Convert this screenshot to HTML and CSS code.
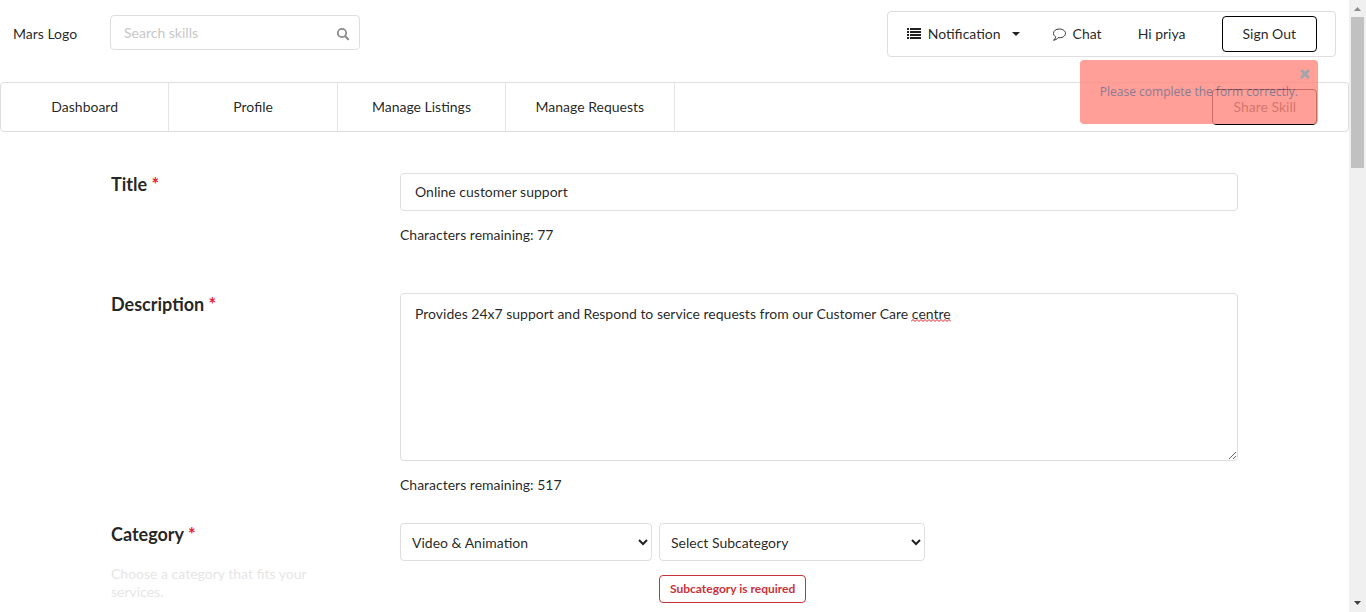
FILE: index.html
```
<!DOCTYPE html>
<html lang="en">
<head>
<meta charset="utf-8">
<title>Share Skill</title>
<link rel="stylesheet" href="styles.css">
</head>
<body>
<div class="page">
  <header class="topbar">
    <a class="brand" href="#">Mars Logo</a>
    <form class="search">
      <input class="search-input" type="text" placeholder="Search skills" aria-label="Search skills">
      <button class="search-button" type="button" aria-label="Search">
        <svg width="14" height="14" viewBox="0 0 14 14" fill="none" stroke="currentColor"><circle cx="6" cy="6" r="4.2" stroke-width="1.8"/><path d="M9.2 9.2l3 3" stroke-width="2" stroke-linecap="round"/></svg>
      </button>
    </form>
    <div class="account">
      <button class="menu-item notification" type="button">
        <svg width="14" height="12" viewBox="0 0 14 12" fill="currentColor"><path d="M0 0h2v2H0zM3 0h11v2H3zM0 3h2v2H0zM3 3h11v2H3zM0 6h2v2H0zM3 6h11v2H3zM0 9h2v2H0zM3 9h11v2H3z"/></svg>
        <span>Notification</span>
        <svg class="caret" width="8" height="4" viewBox="0 0 8 4" fill="currentColor"><path d="M0 0h8L4 4z"/></svg>
      </button>
      <a class="menu-item" href="#">
        <svg width="14" height="13" viewBox="0 0 14 13" fill="none" stroke="currentColor" stroke-width=".9" stroke-linejoin="round"><path d="M7.300 1C3.900 1 1.500 2.900 1.500 5.300c0 1.500.8 2.700 2.200 3.500-.1 1.300-.9 2.400-2.200 3.300 2 0 3.600-.9 4.500-2.400 4.300.5 7.500-1.600 7.500-4.400C13.500 2.900 10.700 1 7.300 1z"/></svg>
        <span>Chat</span>
      </a>
      <span class="greeting">Hi priya</span>
      <button class="outline-button" type="button">Sign Out</button>
    </div>
  </header>

  <nav class="tabs">
    <a class="tab" href="#">Dashboard</a>
    <a class="tab" href="#">Profile</a>
    <a class="tab" href="#">Manage Listings</a>
    <a class="tab" href="#">Manage Requests</a>
    <button class="outline-button share" type="button">Share Skill</button>
  </nav>

  <form class="skill-form">
    <div class="row title-row">
      <label class="row-label" for="title">Title <span class="required">*</span></label>
      <div>
        <input class="field" id="title" type="text" value="Online customer support">
        <p class="remaining">Characters remaining: 77</p>
      </div>
    </div>
    <div class="row description-row">
      <label class="row-label" for="description">Description <span class="required">*</span></label>
      <div>
        <div class="field-wrap">
          <textarea class="field area" id="description" spellcheck="false">Provides 24x7 support and Respond to service requests from our Customer Care centre</textarea>
          <svg class="squiggle" width="40" height="3" viewBox="0 0 40 3" fill="none" stroke="#e01b24"><path d="M0 2.500l2-2 2 2 2-2 2 2 2-2 2 2 2-2 2 2 2-2 2 2 2-2 2 2 2-2 2 2 2-2 2 2 2-2 2 2 2-2 2 2"/></svg>
        </div>
        <p class="remaining">Characters remaining: 517</p>
      </div>
    </div>
    <div class="row">
      <div>
        <label class="row-label" for="category">Category <span class="required">*</span></label>
        <p class="hint">Choose a category that fits your services.</p>
      </div>
      <div class="selects">
        <select class="select category" id="category"><option>Video &amp; Animation</option></select>
        <div class="subcategory">
          <select class="select" aria-label="Subcategory"><option>Select Subcategory</option></select>
          <div class="error">Subcategory is required</div>
        </div>
      </div>
    </div>
  </form>
</div>

<div class="scrollbar" aria-hidden="true">
  <svg class="arrow" width="7" height="4" viewBox="0 0 7 4"><path fill="#8a8a8a" d="M0 4l3.500-4L7 4z"/></svg>
  <div class="thumb"></div>
  <svg class="arrow" width="7" height="4" viewBox="0 0 7 4"><path fill="#404040" d="M0 0h7L3.500 4z"/></svg>
</div>

<div class="toast" role="alert">
  <button class="toast-close" type="button" aria-label="Close">
    <svg width="10" height="10" viewBox="0 0 10 10" fill="none" stroke="currentColor" stroke-width="3"><path d="M1 1l8 8M9 1L1 9"/></svg>
  </button>
  <span>Please complete the form correctly.</span>
</div>
</body>
</html>
```
FILE: styles.css
```
* {
  box-sizing: border-box;
}

body {
  margin: 0;
  display: flex;
  align-items: flex-start;
  min-height: 100vh;
  background: #fff;
  color: rgba(0, 0, 0, 0.87);
  font: 14px/18px Lato, sans-serif;
}

button,
input,
textarea,
select {
  font: inherit;
  color: inherit;
}

a {
  color: inherit;
  text-decoration: none;
}

p {
  margin: 0;
}

.page {
  flex: 1;
  min-width: 0;
}

.topbar {
  display: flex;
  align-items: center;
  padding: 11px 13px 25px;
}

.brand {
  width: 97px;
}

.search {
  position: relative;
  width: 250px;
  margin-bottom: 4px;
}

.search-input {
  display: block;
  width: 100%;
  height: 35px;
  padding: 0 36px 0 13px;
  border: 1px solid #dededf;
  border-radius: 4px;
}

.search-input::placeholder {
  color: #c7c7c7;
}

.search-button {
  position: absolute;
  top: 0;
  right: 0;
  display: flex;
  align-items: center;
  height: 100%;
  padding: 4px 10px 0;
  border: 0;
  background: none;
  color: #8a8a8a;
}

.account {
  display: flex;
  align-items: center;
  gap: 36px;
  height: 46px;
  margin-left: auto;
  padding: 0 18px 0 19px;
  border: 1px solid #dededf;
  border-radius: 4px;
}

.menu-item {
  display: flex;
  align-items: center;
  gap: 7px;
  padding: 0;
  border: 0;
  background: none;
}

.notification {
  margin-right: -4px;
}

.caret {
  margin-left: 4px;
}

.outline-button {
  height: 36px;
  padding: 0 20px;
  border: 1px solid #000;
  border-radius: 4px;
  background: #fff;
}

.tabs {
  display: flex;
  align-items: center;
  height: 50px;
  border: 1px solid #dededf;
  border-radius: 4px;
}

.tab {
  display: flex;
  align-items: center;
  justify-content: center;
  width: 12.5%;
  height: 100%;
  border-right: 1px solid #e5e5e6;
}

.share {
  margin: 0 31px 0 auto;
}

.skill-form {
  max-width: 1127px;
  margin: 41px auto 0;
}

.row {
  display: grid;
  grid-template-columns: 289px 1fr;
}

.title-row {
  margin-bottom: 49px;
}

.description-row {
  margin-bottom: 29px;
}

.row-label {
  display: block;
  font-size: 18px;
  font-weight: 700;
  line-height: 23px;
}

.required {
  color: #e8202c;
}

.field {
  display: block;
  width: 100%;
  height: 38px;
  padding: 0 14px 2px;
  border: 1px solid #dededf;
  border-radius: 4px;
  background: #fff;
}

.field-wrap {
  position: relative;
}

.area {
  height: 168px;
  padding: 11px 14px;
}

.squiggle {
  position: absolute;
  top: 26px;
  left: 511px;
}

.remaining {
  margin-top: 15px;
}

.hint {
  max-width: 240px;
  margin-top: 19px;
  color: #e6e6e6;
}

.selects {
  display: flex;
  align-items: flex-start;
  gap: 7px;
}

.select {
  display: block;
  width: 100%;
  height: 38px;
  padding: 0 0 0 7px;
  border: 1px solid #dededf;
  border-radius: 4px;
  background: #fff;
}

.category {
  width: 252px;
}

.subcategory {
  width: 266px;
}

.error {
  width: fit-content;
  margin-top: 14px;
  padding: 4px 10px;
  border: 1px solid #c8323a;
  border-radius: 4px;
  color: #c8323a;
  font-size: 12px;
  font-weight: 700;
}

.scrollbar {
  position: sticky;
  top: 0;
  display: flex;
  flex-direction: column;
  align-items: center;
  width: 17px;
  height: 100vh;
  padding: 7px 0;
  background: #f0f0f0;
}

.thumb {
  width: 13px;
  height: 151px;
  margin: 6px 0 auto;
  background: #c1c1c1;
}

.toast {
  position: fixed;
  top: 60px;
  right: 48px;
  padding: 23px 20px;
  border-radius: 4px;
  background: #ff887e;
  color: #6a5a78;
  font-family: "Open Sans", sans-serif;
  font-size: 12px;
  opacity: 0.8;
}

.toast-close {
  position: absolute;
  top: 9px;
  right: 8px;
  display: flex;
  padding: 0;
  border: 0;
  background: none;
  color: #8a8f98;
}
```
